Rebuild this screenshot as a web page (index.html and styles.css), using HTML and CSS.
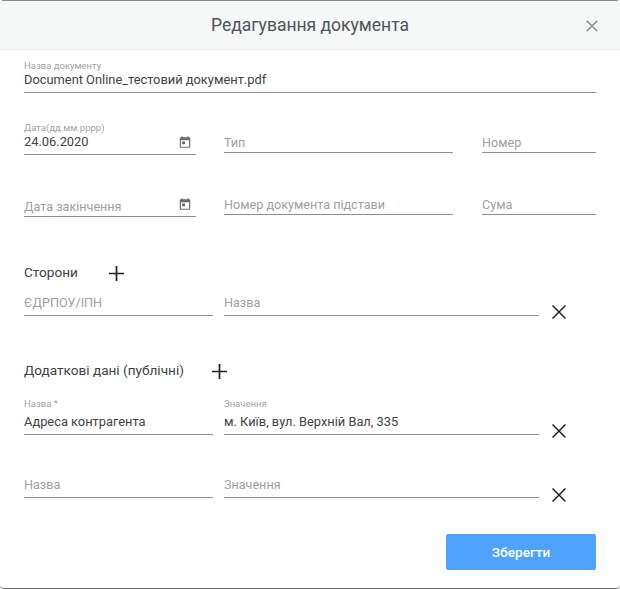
FILE: index.html
```html
<!DOCTYPE html>
<html lang="uk">
<head>
<meta charset="utf-8">
<title>Редагування документа</title>
<link rel="stylesheet" href="styles.css">
</head>
<body>
<div class="modal">
  <header class="head">
    <h1 class="title">Редагування документа</h1>
    <button class="close" aria-label="Закрити">
      <svg viewBox="0 0 12 12" width="12" height="12"><path d="M.7.7l10.6 10.6M11.3.7L.7 11.3"/></svg>
    </button>
  </header>
  <div class="body">
    <div class="row row-name">
      <div class="field filled grow h-name"><span class="label">Назва документу</span><span class="value">Document Online_тестовий документ.pdf</span></div>
    </div>
    <div class="row row-a">
      <div class="field filled date h-date1"><span class="label">Дата(дд.мм.рррр)</span><span class="value">24.06.2020</span>
        <svg class="cal" viewBox="0 0 24 24" width="14" height="14"><path d="M19 4h-1V2h-2v2H8V2H6v2H5a2 2 0 0 0-2 2v14a2 2 0 0 0 2 2h14a2 2 0 0 0 2-2V6a2 2 0 0 0-2-2zm0 16H5V9h14v11zM7 11h5v5H7z"/></svg>
      </div>
      <div class="field top type h-a"><span class="ph">Тип</span></div>
      <div class="field top num h-a"><span class="ph">Номер</span></div>
    </div>
    <div class="row row-b">
      <div class="field top date h-date2"><span class="ph">Дата закінчення</span>
        <svg class="cal" viewBox="0 0 24 24" width="14" height="14"><path d="M19 4h-1V2h-2v2H8V2H6v2H5a2 2 0 0 0-2 2v14a2 2 0 0 0 2 2h14a2 2 0 0 0 2-2V6a2 2 0 0 0-2-2zm0 16H5V9h14v11zM7 11h5v5H7z"/></svg>
      </div>
      <div class="field top type h-a"><span class="ph">Номер документа підстави</span></div>
      <div class="field top num h-a"><span class="ph">Сума</span></div>
    </div>
    <div class="section s-parties">
      <h2 class="sec-title">Сторони</h2>
      <button class="add" aria-label="Додати"><svg viewBox="0 0 14 14" width="14" height="14"><path d="M7 0v14M0 7h14"/></svg></button>
    </div>
    <div class="row row-p">
      <div class="field key h-p"><span class="ph">ЄДРПОУ/ІПН</span></div>
      <div class="field val h-p"><span class="ph">Назва</span></div>
      <button class="del" aria-label="Видалити"><svg viewBox="0 0 14 14" width="14" height="14"><path d="M.5.5l13 13M13.5.5l-13 13"/></svg></button>
    </div>
    <div class="section s-extra">
      <h2 class="sec-title">Додаткові дані (публічні)</h2>
      <button class="add" aria-label="Додати"><svg viewBox="0 0 14 14" width="14" height="14"><path d="M7 0v14M0 7h14"/></svg></button>
    </div>
    <div class="row row-e1">
      <div class="field filled key h-e"><span class="label gap">Назва *</span><span class="value">Адреса контрагента</span></div>
      <div class="field filled val h-e"><span class="label gap">Значення</span><span class="value">м. Київ, вул. Верхній Вал, 335</span></div>
      <button class="del del-e1" aria-label="Видалити"><svg viewBox="0 0 14 14" width="14" height="14"><path d="M.5.5l13 13M13.5.5l-13 13"/></svg></button>
    </div>
    <div class="row row-e2">
      <div class="field key h-p"><span class="ph">Назва</span></div>
      <div class="field val h-p"><span class="ph">Значення</span></div>
      <button class="del del-e2" aria-label="Видалити"><svg viewBox="0 0 14 14" width="14" height="14"><path d="M.5.5l13 13M13.5.5l-13 13"/></svg></button>
    </div>
    <div class="foot"><button class="save">Зберегти</button></div>
  </div>
</div>
</body>
</html>
```
FILE: styles.css
```css
* { box-sizing: border-box; }
html, body { margin: 0; padding: 0; background: #fff; }
body { width: 620px; height: 589px; overflow: hidden; font-family: Roboto, "Liberation Sans", sans-serif; }
button { border: 0; background: none; padding: 0; font: inherit; cursor: pointer; }
svg { display: block; }

.modal { height: 589px; border-top: 1px solid #8a8a8a; border-bottom: 1px solid #6f6f6f; border-radius: 4px; background: #fff; display: flex; flex-direction: column; }

.head { height: 49px; flex: none; background: #f6f7f7; border-bottom: 1px solid #eeeeee; display: flex; align-items: center; justify-content: center; position: relative; }
.title { margin: 0; font-size: 17.5px; font-weight: 400; color: #4f545a; }
.close { position: absolute; right: 22px; top: 19px; }
.close svg path { stroke: #8f8f8f; stroke-width: 1.5; fill: none; }

.body { padding: 0 24px; flex: 1; display: flex; flex-direction: column; }

.row { display: flex; align-items: flex-start; flex: none; }
.row-name { margin-top: 10px; }
.row-a { margin-top: 29px; }
.row-b { margin-top: 29px; }
.row-p { margin-top: 5px; }
.row-e1 { margin-top: 19px; }
.row-e2 { margin-top: 30px; }

.field { position: relative; border-bottom: 1px solid #8e8e8e; display: flex; flex-direction: column; justify-content: flex-end; padding-bottom: 4px; }
.field.top { padding-bottom: 1px; }
.grow { flex: 1; }
.date { width: 172px; margin-right: 28px; }
.type { width: 229px; margin-right: 29px; }
.num { width: 114px; }
.key { width: 189px; margin-right: 11px; }
.val { width: 315px; }

.h-name { height: 33px; }
.h-date1 { height: 33px; }
.h-date2 { height: 33px; }
.h-a { height: 31px; }
.h-p { height: 30px; }
.h-e { height: 37px; }

.label { font-size: 9.5px; line-height: 12px; color: #a3a3a3; }
.label.gap { margin-bottom: 4px; }
.value { font-size: 12.85px; line-height: 16px; color: #404345; }
.ph { font-size: 12.6px; line-height: 17px; color: #a0a0a0; }

.cal { position: absolute; right: 4px; bottom: 5px; fill: #6b6b6b; }

.section { display: flex; align-items: center; flex: none; height: 17px; }
.sec-title { margin: 0; font-size: 13.6px; line-height: 17px; font-weight: 400; color: #404345; }
.s-parties { margin-top: 47px; }
.s-parties .add { margin-left: 31px; }
.s-extra { margin-top: 43px; }
.add { margin-left: 28px; margin-top: 2px; }
.add svg { width: 15px; height: 15px; }
.add svg path { stroke: #222; stroke-width: 1.6; fill: none; }

.del { margin-left: 13px; margin-top: 19px; }
.del.del-e1 { margin-top: 26px; }
.del.del-e2 { margin-top: 20px; }
.del svg path { stroke: #222; stroke-width: 1.5; fill: none; }

.foot { display: flex; justify-content: flex-end; margin-top: 32px; }
.save { width: 150px; height: 36px; background: #4fa3ff; color: #fff; border-radius: 2px; font-size: 13.6px; font-weight: 500; }
```
